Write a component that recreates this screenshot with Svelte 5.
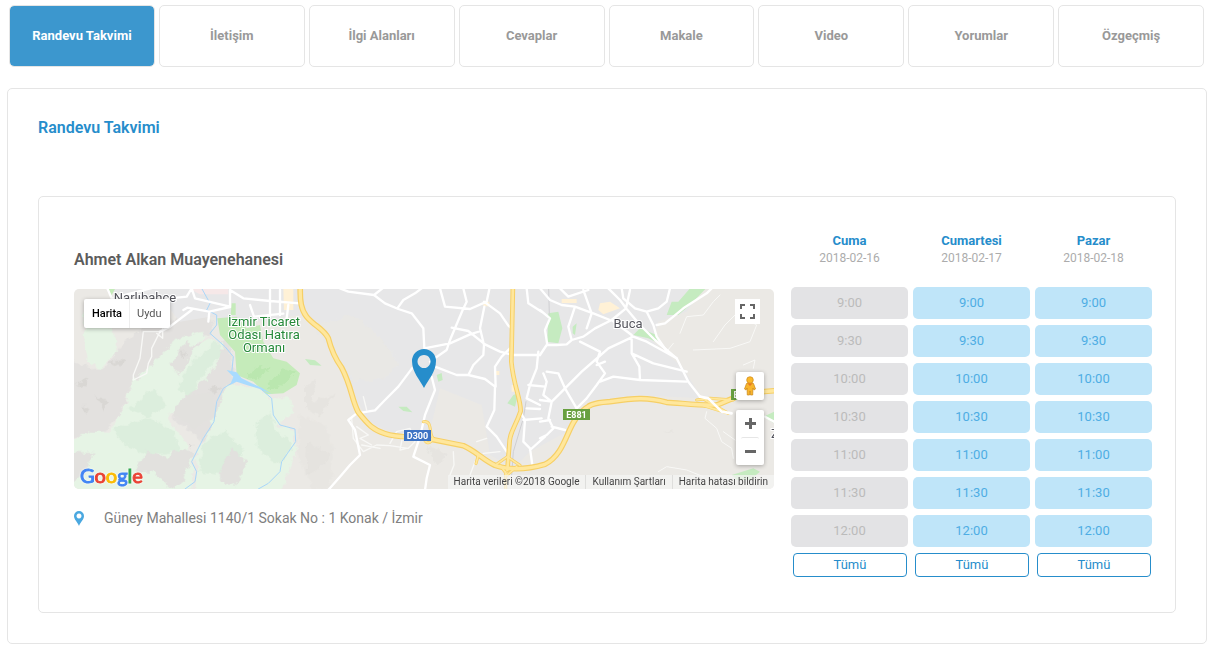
<script>
  const tabs = ['Randevu Takvimi', 'İletişim', 'İlgi Alanları', 'Cevaplar', 'Makale', 'Video', 'Yorumlar', 'Özgeçmiş'];
  const times = ['9:00', '9:30', '10:00', '10:30', '11:00', '11:30', '12:00'];
  const days = [
    { name: 'Cuma', date: '2018-02-16', open: false },
    { name: 'Cumartesi', date: '2018-02-17', open: true },
    { name: 'Pazar', date: '2018-02-18', open: true }
  ];
  let active = $state(0);

  const highway =
    'M691 0 C689 50 694 75 710 95 C735 125 760 130 775 160 C785 200 795 220 815 248 C845 305 845 345 865 382 C895 420 910 435 945 446 C985 460 1020 452 1060 458 L1180 482 C1220 500 1240 525 1275 541 C1330 560 1390 548 1425 538 C1480 510 1490 440 1515 405 C1550 350 1590 352 1620 350 C1690 340 1730 335 1790 352 C1840 355 1890 362 1940 360 C1985 345 1990 325 2130 316';
  const northRoad = 'M1329 -10 L1324 230 C1330 300 1352 340 1352 378 C1335 430 1318 440 1318 480 L1312 555';
  const ramps =
    'M1060 410 C1090 405 1075 450 1090 460 C1075 485 1065 470 1060 458 M1275 541 L1312 515 L1350 541 M1290 541 L1312 570 L1340 545 M1307 560 V614 M1225 510 L1218 536 M1880 345 L1920 340 L1990 345 M1900 362 L1975 385 M1905 345 L1970 382';
  const streets = [
    'M112 10 L125 40 L300 -5 M300 40 L350 35 L365 10 L375 40 L480 65 L480 15 L520 40 L600 48 L690 55 M540 60 L552 95 L640 86 M600 15 V95 M630 15 V90 M655 60 L650 100 M340 75 L352 68 L418 80 L480 66 M418 80 L415 110 M270 140 L300 125 L365 75',
    'M810 10 L835 20 L912 30 L945 55 L985 72 L1025 85 L1060 130 L1063 190 M912 30 L940 8 M982 70 L1000 45 L1035 25 L1055 10 M1180 10 L1190 50 L1178 75 L1140 165 L1130 195 L1080 230 M1110 10 L1125 65 L1200 72 L1250 50 L1258 12 M1242 50 L1290 85 L1315 122 L1322 128 M1063 190 L1140 175 L1200 148 L1232 138 M1145 128 L1195 138 L1245 178 L1290 200 L1330 210 L1410 210 M1243 65 L1230 130 L1242 180 L1240 210 L1210 240 L1195 270 L1160 270 L1095 245 M1320 190 L1295 215 L1275 245 L1277 305 M1195 270 L1245 282 L1275 305 L1273 375 L1250 425 L1280 455 L1310 500',
    'M1026 250 L985 305 L945 345 L915 376 L860 385 L835 405 L855 435 L870 510 L840 540 L810 575 L775 615 M1085 275 L1095 315 L1065 390 L1050 455 L1030 515 L1080 540 L1070 580 L1065 615',
    'M1370 10 L1375 55 L1415 80 M1405 200 L1400 250 L1380 300 L1370 340 L1410 360 M1375 300 L1425 305 M1370 370 L1410 372 M1350 380 L1365 405 L1360 470 L1380 490 L1387 540 M1360 405 L1415 400 M1380 495 L1425 455'
  ];
  const eastStreets = [
    'M0 75 L30 100 L15 135 L22 180 L50 180 L80 178 L95 165 L130 155 L165 130 L215 105 L258 70 L270 15 M0 10 L30 45 L65 60 L105 65 L160 85 L210 105 M60 10 L85 35 L145 15 M105 65 L85 125 L95 165 M130 15 L155 85 L140 130 M205 10 L240 45 L260 72 L300 120 L345 165 L410 220 L445 290 L480 335 L560 385',
    'M245 10 L250 40 L285 70 L320 80 L355 70 L380 50 L390 10 M320 80 L340 120 L350 155 L385 205 M350 120 L375 115 L400 95 L430 70 L500 25 L515 10 M120 170 L180 200 L170 230 L195 265 L170 300 L140 340 L110 370 M170 240 L195 230 M215 105 L275 150 L275 205 L340 235 L440 260 M280 155 L205 190 L125 260 L75 310 L55 265 L20 260 M275 205 L298 245 L300 285 L440 290 M300 285 L220 275 L180 290 M280 155 L320 170 L410 220',
    'M0 210 L20 180 M10 265 L20 290 L10 330 L35 350 L45 340 L75 310 L110 370 M0 345 L35 350 L25 400 L40 430 L20 450 L0 460 M0 410 L30 405 M35 425 L75 435 M675 395 L702 410'
  ];
</script>

<div class="page">
  <nav aria-label="Profil">
    {#each tabs as tab, i}
      <button class="tab" class:active={active === i} onclick={() => (active = i)}>{tab}</button>
    {/each}
  </nav>

  <main>
    <h1>Randevu Takvimi</h1>
    <section class="card">
      <div class="place">
        <h2>Ahmet Alkan Muayenehanesi</h2>
        <div class="map">
          <svg class="canvas" viewBox="0 0 700 200" preserveAspectRatio="xMidYMid slice" aria-label="Harita">
            <defs>
              <filter id="rugged" x="0" y="0" width="100%" height="100%">
                <feTurbulence type="fractalNoise" baseFrequency="0.05" numOctaves="3" seed="4" />
                <feDisplacementMap in="SourceGraphic" scale="26" xChannelSelector="R" yChannelSelector="G" />
              </filter>
            </defs>
            <rect width="700" height="200" fill="#ebe9e5" />
            <g transform="translate(-4 -4) scale(.333333)" stroke-linecap="round" stroke-linejoin="round">
              <!-- terrain -->
              <g filter="url(#rugged)">
                <path fill="#e3e1df" d="M-40 200 L60 250 L110 245 L145 190 L215 130 L280 110 L380 80 L430 110 L420 150 L330 180 L250 240 L190 290 L150 390 L100 440 L-40 470 Z M300 180 L480 170 L500 420 L400 470 L310 400 Z" />
                <path fill="#e6f4e5" d="M40 80 L130 130 L140 200 L95 250 L50 230 Z M-40 490 L60 440 L120 440 L160 370 L190 290 L250 230 L320 160 L400 140 L410 160 L330 200 L310 260 L350 230 L370 190 L420 160 L460 180 L440 240 L390 300 L340 340 L290 400 L340 460 L370 530 L360 660 L-40 660 Z" />
                <path fill="#e6f4e5" d="M470 300 L560 305 L600 340 L660 340 L670 385 L620 420 L670 430 L680 490 L620 660 L370 660 L385 530 L370 520 L410 450 L440 380 Z" />
                <path fill="#dceedd" d="M130 430 L240 400 L310 440 L330 500 L230 510 L150 470 Z M320 310 L370 230 L440 170 L460 200 L400 270 L360 330 Z M400 470 L470 440 L520 500 L480 570 L390 560 Z M560 410 L600 380 L620 440 L670 480 L630 540 L560 490 Z M180 370 L250 310 L290 360 L230 400 Z" />
                <path fill="#e2e1de" d="M-40 495 L70 505 L50 560 L0 600 Z M195 560 L230 500 L290 520 L330 490 L370 500 L340 590 L300 614 L250 560 Z M300 240 L350 170 L370 200 L330 270 Z M310 380 L350 340 L430 320 L440 380 L380 430 Z M450 550 L490 490 L530 530 L500 600 L450 590 Z" />
                <path fill="#d9d7d4" d="M15 295 L50 280 L45 310 Z M75 335 L110 345 L105 380 Z M40 360 L55 370 L45 390 Z M355 475 L370 478 L360 490 Z M420 310 L450 305 L432 330 Z M115 230 L165 225 L150 245 Z M330 205 L345 200 L340 225 Z" />
                <path fill="#e8e6e2" d="M690 390 L760 420 L790 490 L780 614 L730 614 L680 500 Z" />
                <path fill="#e1dfdb" opacity=".5" d="M705 300 L740 290 L720 350 L790 330 L750 390 L705 370 Z M715 470 L780 510 L750 550 L710 570 Z M940 270 L960 245 L945 280 Z M1070 480 L1130 510 L1100 540 Z M790 175 L835 178 L820 188 Z M1780 438 L1810 438 L1800 444 Z" />
              </g>
              <!-- built-up area -->
              <path fill="#e7e7e8" d="M120 10 L1900 10 L1850 80 L1765 110 L1750 170 L1840 250 L1895 340 L1700 330 L1540 350 L1490 440 L1380 500 L1330 550 L1260 510 L1235 360 L1110 310 L1075 460 L980 452 L900 410 L850 330 L820 240 L775 150 L690 90 L560 110 L420 95 L330 110 L290 60 L160 50 Z" />
              <path fill="#e9e8e5" filter="url(#rugged)" d="M720 120 L850 90 L920 150 L960 190 L985 240 L950 280 L850 290 L800 210 Z" />
              <path fill="#f6e8e8" d="M355 10 H475 V28 H390 Z" />
              <path fill="#fff1d6" d="M640 10 H670 V75 H642 Z M1240 50 H1258 V64 H1240 Z M1275 258 H1288 V270 H1275 Z M1325 300 H1337 V320 H1325 Z M1585 75 L1590 55 L1620 50 L1650 70 L1600 88 Z M1475 42 H1520 V54 H1475 Z" />
              <path fill="#c5ebba" d="M442 100 L500 95 L530 130 L570 120 L580 170 L610 220 L650 230 L690 265 L680 300 L640 325 L590 328 L550 290 L500 270 L495 200 L450 150 Z M110 10 L122 35 L135 12 Z M485 55 H497 V90 H482 Z" />
              <path fill="#bae7af" filter="url(#rugged)" d="M530 275 L570 240 L600 255 L555 285 Z M590 305 L640 250 L680 260 L620 315 Z" />
              <path fill="#c5ebc0" d="M705 222 L735 226 L755 242 L720 240 Z M985 365 L1010 365 L1027 382 L1000 378 Z M1100 270 L1115 264 L1118 285 L1105 290 Z M1312 355 L1330 330 L1345 325 L1335 365 Z M1435 85 L1465 80 L1477 130 L1465 175 L1432 170 Z M1508 125 L1520 115 L1515 150 L1508 145 Z M1690 150 L1710 130 L1760 150 L1765 175 L1735 160 Z M1790 90 L1805 50 L1825 50 L1860 10 L1908 10 L1860 60 L1825 90 Z M2080 395 L2112 380 V415 Z M1985 570 L2050 550 L2070 560 L2040 585 L2000 585 Z" />
              <path fill="none" stroke="#a9d6f9" stroke-width="3" d="M395 10 L420 55 L410 75 L440 90 L440 120 L420 145 L465 185 L490 215 L485 265 M500 285 L460 310 L440 350 L432 410 L400 460 L365 530 L380 560 L375 590 L345 612 M570 310 L605 340 L610 390 L630 420 L675 432 L677 470 L635 530 L630 560 L595 595 L565 612" />
              <path fill="#a9dbff" d="M470 255 L500 262 L515 280 L545 295 L575 308 L605 327 L570 312 L530 300 L500 290 L480 300 L490 275 Z" />
              <!-- minor roads -->
              <g fill="none" stroke="#f8f8f6" stroke-width="4">
                <path d="M270 140 L220 140 L210 220 L190 270 L190 285 L230 265 L235 235 L245 215 L245 190 L270 140 M278 120 V160 L260 145" />
                <path d="M880 335 L890 375 M845 400 L850 460 L880 500 L920 480 L960 482 L1015 490 L1035 470 L1020 430 L980 440 L960 475 M860 425 L895 450 L870 460 L905 480 M875 480 L930 490 M1000 445 L990 495 L1010 490 M1150 500 L1152 540 L1140 570 M1200 570 L1215 530 M1220 470 L1250 460 M1240 505 L1290 500" />
                <path d="M1830 145 L1850 95 L1900 90 L1930 50 L1950 30 M1870 195 L1980 190 L2040 170 L2060 120 L2000 85 L1965 120 L1930 170 M2020 240 L2055 225 L2050 250 M1790 200 L1810 175 M1910 380 L1905 400 L1940 430 L1955 470 L1985 490 L1990 520 M1960 440 L1995 465 M1765 560 L1790 545 L1850 555 L1900 575" stroke-width="3" />
              </g>
              <path fill="none" stroke="#cfcfd2" stroke-width="3" d="M1368 350 L1360 400 L1330 500 L1325 570 M1436 10 L1438 90" />
              <!-- streets -->
              <g fill="none" stroke="#fff" stroke-width="7">
                {#each streets as d}<path {d} />{/each}
                <g transform="translate(1410 0)">
                  {#each eastStreets as d}<path {d} />{/each}
                </g>
              </g>
              <!-- highways -->
              <g fill="none" stroke="#f6cf65">
                <path d={ramps} stroke-width="9" />
                <path d={highway} stroke-width="17" />
                <path d={northRoad} stroke-width="14" />
              </g>
              <g fill="none" stroke="#ffe79c">
                <path d={ramps} stroke-width="5" />
                <path d={highway} stroke-width="10" />
                <path d={northRoad} stroke-width="8" />
              </g>
              <path fill="none" stroke="#fff" stroke-width="8" d="M1890 335 L1915 340 L1955 380 L1985 385" />
            </g>
            <g class="labels" text-anchor="middle">
              <text x="71" y="13">Narlıbahçe</text>
              <g class="park">
                <text x="190" y="37">İzmir Ticaret</text>
                <text x="190" y="50">Odası Hatıra</text>
                <text x="190" y="63">Ormanı</text>
              </g>
              <text x="554" y="39">Buca</text>
              <text x="701" y="149">Z</text>
            </g>
            <g class="shields" text-anchor="middle">
              <rect x="330" y="141" width="27" height="11" fill="#3c73c4" />
              <text x="343.5" y="150">D300</text>
              <rect x="489" y="120" width="27" height="11" fill="#68a040" />
              <text x="502.5" y="129">E881</text>
              <rect x="657" y="100" width="12" height="11" fill="#68a040" />
              <text x="662" y="109">E</text>
            </g>
            <path fill="#268dcb" fill-rule="evenodd" d="M350 99 C346 91 338 83 338 72 A12 12 0 0 1 362 72 C362 83 354 91 350 99 Z M350 66 a6.5 6.5 0 1 0 .01 0 Z" />
          </svg>

          <div class="types">
            <button class="on">Harita</button>
            <button>Uydu</button>
          </div>
          <button class="tool full" aria-label="Tam ekran">
            <svg width="15" height="15" viewBox="0 0 15 15"><path d="M1 5V1H5M10 1h4V5M14 10v4H10M5 14H1V10" fill="none" stroke="#666" stroke-width="2" /></svg>
          </button>
          <div class="tools">
            <button class="tool" aria-label="Sokak görünümü">
              <svg width="14" height="20" viewBox="0 0 14 20">
                <path d="M3.5 7.5 Q7 5.5 10.5 7.5 L12.5 13 L11 14 L10 12 L9.7 19 H7.5 L7 15 L6.5 19 H4.3 L4 12 L3 14 L1.5 13 Z" fill="#f8b52c" stroke="#c98516" stroke-width=".7" />
                <circle cx="7" cy="4" r="3.3" fill="#fbb829" stroke="#cf8a1b" stroke-width=".7" />
                <path d="M4.5 7.5 L7 10 L9.5 7.5" fill="#e87722" />
              </svg>
            </button>
            <div class="zoom">
              <button class="tool" aria-label="Yakınlaştır"><svg width="11" height="11" viewBox="0 0 11 11"><path d="M5.5 0v11M0 5.5h11" stroke="#666" stroke-width="3" /></svg></button>
              <button class="tool" aria-label="Uzaklaştır"><svg width="11" height="11" viewBox="0 0 11 11"><path d="M0 5.5h11" stroke="#666" stroke-width="3" /></svg></button>
            </div>
          </div>
          <a class="logo" href="#google"><span class="b">G</span><span class="r">o</span><span class="y">o</span><span class="b">g</span><span class="g">l</span><span class="r">e</span></a>
          <div class="legal">
            <span>Harita verileri ©2018 Google</span>
            <a href="#terms">Kullanım Şartları</a>
            <a href="#report">Harita hatası bildirin</a>
          </div>
        </div>
        <p class="address">
          <svg width="10" height="15" viewBox="0 0 10 15"><path fill="#4aa8e0" fill-rule="evenodd" d="M5 15 C3.5 11 0 8.5 0 5 A5 5 0 0 1 10 5 C10 8.5 6.5 11 5 15 Z M5 2.5 a2.5 2.5 0 1 0 .01 0 Z" /></svg>
          <span>Güney Mahallesi 1140/1 Sokak No : 1 Konak / İzmir</span>
        </p>
      </div>

      <div class="schedule">
        {#each days as day}
          <div class="day">
            <h3>{day.name}</h3>
            <p>{day.date}</p>
            <div class="slots">
              {#each times as time}
                <button class="slot" disabled={!day.open}>{time}</button>
              {/each}
              <button class="all">Tümü</button>
            </div>
          </div>
        {/each}
      </div>
    </section>
  </main>
</div>

<style>
  :global(body) { margin: 0; background: #fff; }
  .page { font-family: Roboto, sans-serif; font-size: 13px; padding: 5px 6px 5px 7px; }
  button { font: inherit; padding: 0; border: 0; background: none; cursor: pointer; }
  h1, h2, h3, p { margin: 0; }
  nav { display: flex; gap: 4px; padding: 0 3px 0 2px; }
  .tab { flex: 1 1 0; height: 62px; padding-bottom: 2px; border: 1px solid #e5e5e5; border-radius: 5px; background: #fff; color: #999; font-weight: 700; background-clip: padding-box; }
  .tab.active { background-color: #3c97ce; color: #fff; }
  main { margin-top: 21px; border: 1px solid #e5e5e5; border-radius: 5px; padding: 29px 30px 30px; }
  h1 { font-size: 16px; line-height: 20px; font-weight: 600; color: #268dcb; }
  .card { display: flex; gap: 17px; margin-top: 58px; border: 1px solid #e5e5e5; border-radius: 5px; padding: 35px 23px 35px 35px; }
  .place { flex: 1; min-width: 0; padding-top: 18px; }
  h2 { font-size: 16px; line-height: 20px; font-weight: 600; color: #5c5c5c; margin-bottom: 19px; }
  .map { position: relative; height: 200px; border-radius: 5px; overflow: hidden; }
  .canvas { display: block; width: 100%; height: 100%; }
  .labels text { font-size: 13px; fill: #54545c; stroke: #fff; stroke-width: 2px; paint-order: stroke; }
  .labels .park text { fill: #26893a; }
  .shields text { font-size: 9px; font-weight: 700; fill: #fff; }
  .types { position: absolute; left: 10px; top: 10px; display: flex; background: #fff; border-radius: 2px; box-shadow: 0 1px 4px rgba(0, 0, 0, .3); font-size: 11px; }
  .types button { height: 29px; padding: 0 8px 0 7px; color: #565656; }
  .types .on { padding: 0 7px 0 8px; color: #000; font-weight: 500; border-right: 1px solid #eee; }
  .tool { display: grid; place-items: center; width: 28px; height: 28px; background: #fff; border-radius: 2px; box-shadow: 0 1px 4px rgba(0, 0, 0, .3); }
  .full { position: absolute; right: 14px; top: 10px; width: 25px; height: 25px; box-shadow: none; border-radius: 0; }
  .tools { position: absolute; right: 10px; top: 83px; display: grid; gap: 10px; }
  .zoom { background: #fff; border-radius: 2px; box-shadow: 0 1px 4px rgba(0, 0, 0, .3); }
  .zoom .tool { box-shadow: none; background: none; height: 27px; }
  .zoom .tool + .tool { border-top: 1px solid #e6e6e6; width: 18px; height: 28px; margin: 0 5px; }
  .logo { position: absolute; left: 6px; bottom: 1px; font: 400 20px/26px Lato, sans-serif; text-decoration: none; -webkit-text-stroke: 1px currentColor; filter: drop-shadow(0 0 1px #fff); }
  .b { color: #4285f4; } .r { color: #ea4335; } .y { color: #fbbc05; } .g { color: #34a853; }
  .legal { position: absolute; right: 0; bottom: 0; display: flex; font-size: 10px; line-height: 14px; color: #444; background: rgba(245, 245, 245, .7); }
  .legal > * { padding: 0 6px; color: #444; text-decoration: none; }
  .legal > * + * { border-left: 1px solid #dededc; }
  .address { display: flex; align-items: center; margin-top: 19px; font-size: 14px; line-height: 20px; color: #808080; gap: 20px; }
  .schedule { display: grid; grid-template-columns: repeat(3, 117px); gap: 5px; text-align: center; }
  h3 { font-size: 13px; line-height: 17px; font-weight: 700; color: #268dcb; }
  .day p { font-size: 12px; line-height: 18px; color: #acacac; }
  .slots { display: grid; gap: 6px; margin-top: 20px; }
  .slot { height: 32px; padding-bottom: 2px; border-radius: 5px; background: #bfe5f9; color: #4eade4; }
  .slot:disabled { background: #e3e3e5; color: #bbb; cursor: default; }
  .all { height: 24px; margin: 0 1px 0 2px; padding-bottom: 2px; border: 1px solid #268dcb; border-radius: 4px; color: #268dcb; }
</style>
